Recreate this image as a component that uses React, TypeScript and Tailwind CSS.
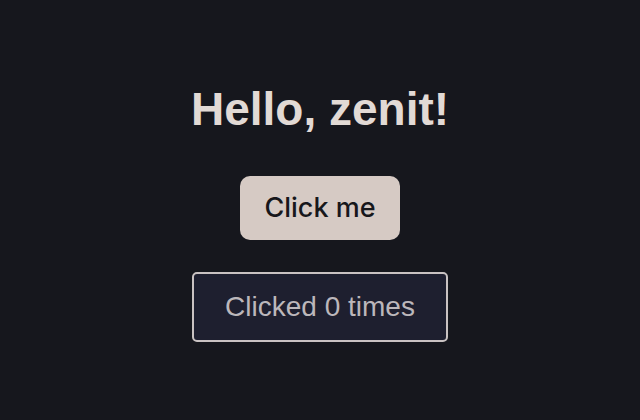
export default function App() {
  return (
    <div className="w-[640px] h-[420px] bg-[#16171d] flex flex-col items-center pt-[82px]" style={{ fontFamily: '"Liberation Sans", Arial, sans-serif' }}>
      <h1 className="text-[46px] leading-[54px] font-bold text-[#e2dad5]">Hello, zenit!</h1>
      <button className="mt-[40px] w-[160px] h-[64px] rounded-[10px] bg-[#d6cac4] text-[#17171b] text-[27px] font-medium" style={{ fontFamily: 'Inter, "Liberation Sans", sans-serif' }}>Click me</button>
      <div className="mt-[32px] w-[256px] h-[70px] rounded-[5px] border-2 border-[#c9c2c2] bg-[#1e1f2f] text-[#bcb7bb] text-[28px] flex items-center justify-center">Clicked 0 times</div>
    </div>
  );
}
